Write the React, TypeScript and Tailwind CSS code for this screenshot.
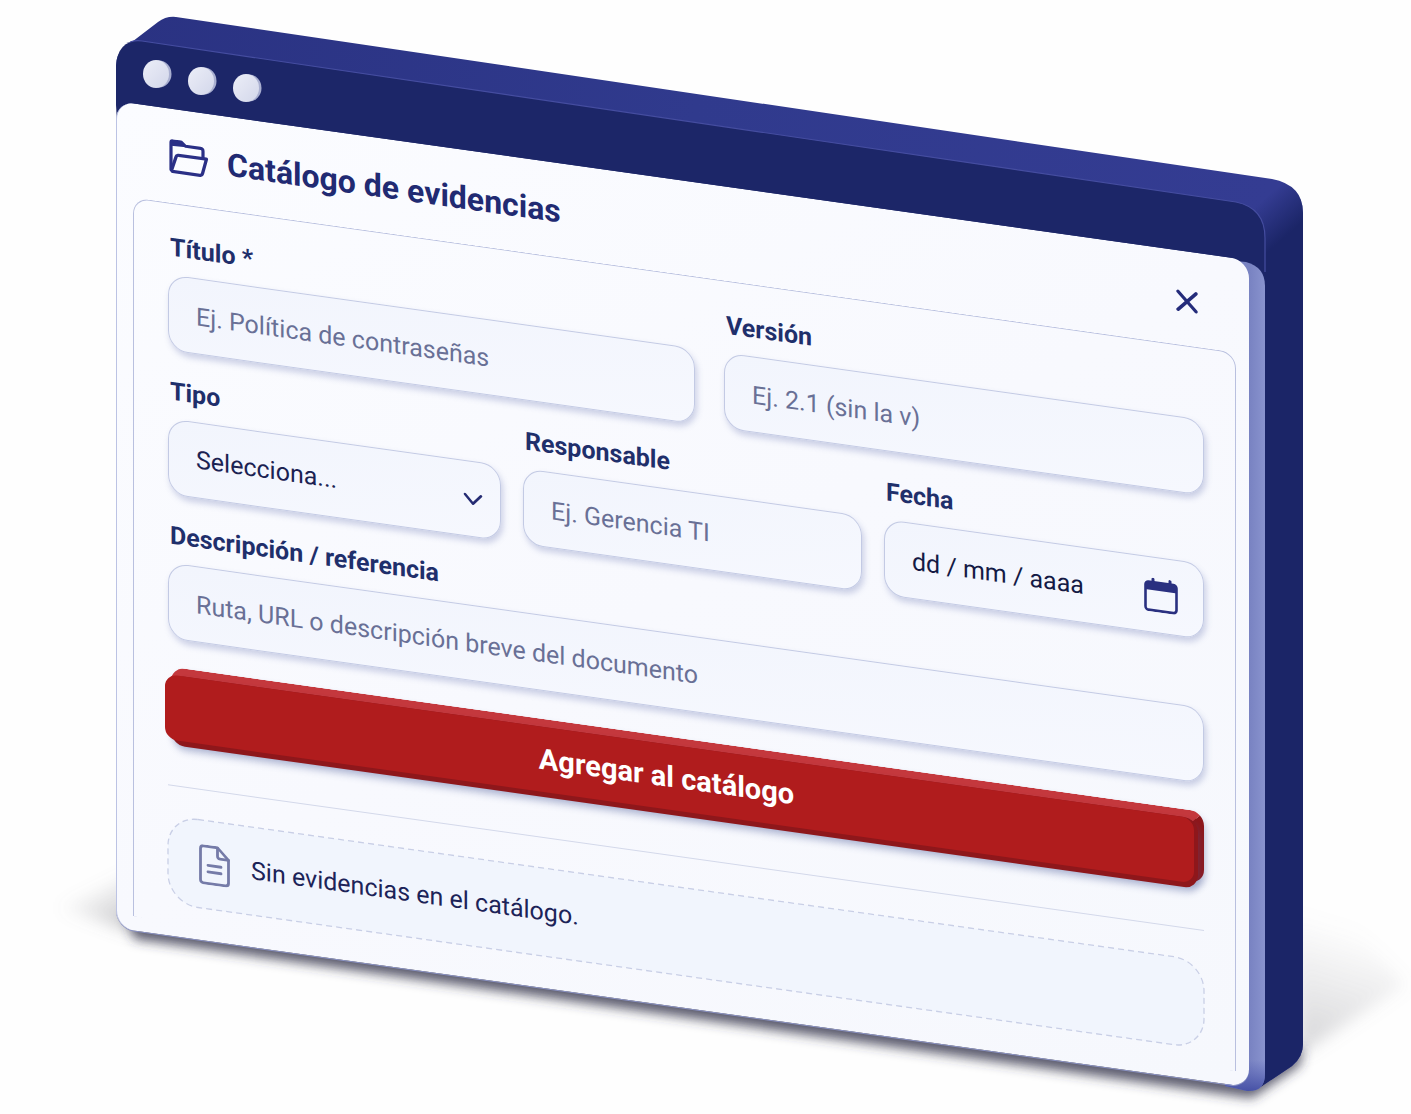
import type { ReactNode } from 'react'

const fieldClass =
  'block h-[76px] w-full rounded-[20px] border border-[#c3cae4] bg-gradient-to-br from-[#f2f5fd] to-[#f6f8fe] px-[27px] text-[25px] shadow-[2px_4px_6px_rgba(84,98,165,0.28)] outline-none placeholder:text-[#697096] placeholder:opacity-100 focus:border-[#6a74bd]'

function Field({ id, label, children }: { id: string; label: string; children: ReactNode }) {
  return (
    <div className="min-w-0">
      <label htmlFor={id} className="mb-[11px] block pl-[2px] text-[25px] leading-[32px] font-bold whitespace-nowrap text-[#1f2f6b]">
        {label}
      </label>
      <div className="relative">{children}</div>
    </div>
  )
}

function FolderIcon() {
  return (
    <svg width="40" height="36" viewBox="0 0 40 36" fill="none" stroke="#2a2f86" strokeWidth="3.200" strokeLinejoin="round" strokeLinecap="round" aria-hidden="true">
      <path d="M2 7V3.500Q2 2 3.500 2H12.500L17 6.500z" fill="#2a2f86" stroke="none" />
      <path d="M2 31V4Q2 2 4 2h8.500l4 3.500H31.500Q34 5.500 34 8V14" />
      <path d="M2.500 31.500L7 17.500Q7.500 15.500 9.500 15.500H37.500L33.500 30.500Q33 32.500 31 32.500H3.500z" />
    </svg>
  )
}

function CalendarIcon() {
  return (
    <svg width="34" height="34" viewBox="0 0 34 34" fill="none" aria-hidden="true">
      <path d="M9 1.500V5M26 1.500V5" stroke="#2a3080" strokeWidth="3" strokeLinecap="round" />
      <rect x="1.500" y="4.500" width="31" height="28" rx="3" stroke="#2a3080" strokeWidth="2.600" />
      <path d="M1 7q0-3 3-3h26q3 0 3 3v5.500H1z" fill="#2a3080" />
    </svg>
  )
}

function DocumentIcon() {
  return (
    <svg width="32" height="40" viewBox="0 0 32 40" fill="none" stroke="#757ba8" strokeWidth="2.800" strokeLinecap="round" strokeLinejoin="round" aria-hidden="true">
      <path d="M4.500 1.500H18.500L29.500 12.500V35.500Q29.500 38.500 26.500 38.500H4.500Q1.500 38.500 1.500 35.500V4.500Q1.500 1.500 4.500 1.500z" />
      <path d="M18.500 2V10Q18.500 12.500 21 12.500H29.500" />
      <path d="M9 20.500H22M9 27H22" />
    </svg>
  )
}

// Extruded shell behind the panel: top face, front bar, side and floor shadow.
function WindowShell() {
  return (
    <svg className="absolute inset-0 h-full w-full" viewBox="0 0 1411 1114" preserveAspectRatio="none" fill="none" aria-hidden="true">
      <defs>
        <linearGradient id="top" x1="116" y1="40" x2="1270" y2="200" gradientUnits="userSpaceOnUse">
          <stop offset="0" stopColor="#2a3282" />
          <stop offset="0.5" stopColor="#303a8d" />
          <stop offset="1" stopColor="#343c92" />
        </linearGradient>
        <linearGradient id="corner" x1="1256" y1="206" x2="1284" y2="238" gradientUnits="userSpaceOnUse">
          <stop offset="0" stopColor="#1b2567" stopOpacity="0" />
          <stop offset="1" stopColor="#1b2567" />
        </linearGradient>
        <linearGradient id="edge" x1="1250" y1="0" x2="1265" y2="0" gradientUnits="userSpaceOnUse">
          <stop offset="0" stopColor="#7983c2" />
          <stop offset="1" stopColor="#8993ce" />
        </linearGradient>
        <linearGradient id="edgeFoot" x1="0" y1="1060" x2="0" y2="1092" gradientUnits="userSpaceOnUse">
          <stop offset="0" stopColor="#4f5ab0" stopOpacity="0" />
          <stop offset="1" stopColor="#4550a5" />
        </linearGradient>
        <linearGradient id="castRight" x1="1310" y1="1040" x2="1345" y2="925" gradientUnits="userSpaceOnUse">
          <stop offset="0" stopColor="#8a8a90" stopOpacity="0.32" />
          <stop offset="1" stopColor="#9a9aa0" stopOpacity="0" />
        </linearGradient>
        <linearGradient id="castLeft" x1="125" y1="935" x2="90" y2="880" gradientUnits="userSpaceOnUse">
          <stop offset="0" stopColor="#66666c" stopOpacity="0.42" />
          <stop offset="1" stopColor="#8a8a90" stopOpacity="0" />
        </linearGradient>
        <linearGradient id="dot" x1="0" y1="0" x2="1" y2="1">
          <stop offset="0" stopColor="#eceef8" />
          <stop offset="1" stopColor="#d3d7ea" />
        </linearGradient>
        <filter id="soft" x="-20%" y="-20%" width="140%" height="140%">
          <feGaussianBlur stdDeviation="8" />
        </filter>
        <filter id="tight" x="-5%" y="-20%" width="110%" height="140%">
          <feGaussianBlur stdDeviation="6" />
        </filter>
      </defs>
      <path d="M1290 890L1330 900L1405 985L1300 1054z" fill="url(#castRight)" filter="url(#soft)" />
      <path d="M140 870L60 908L140 934z" fill="url(#castLeft)" filter="url(#soft)" />
      <path d="M125 912L1250 1078L1303 1045L1300 1065L1252 1098L135 939z" fill="#35354a" fillOpacity="0.8" filter="url(#tight)" />

      <path d="M116 105V66Q116 54 124 48L158 22Q166 16 176 17L1272 179Q1303 185 1303 213V1044Q1303 1057 1292 1066L1262 1086Q1254 1091 1244 1090L1180 1000V250z" fill="url(#top)" />
      <path d="M1240 203L1272 179Q1303 185 1303 213V1044Q1303 1057 1292 1066L1262 1086Q1254 1091 1244 1090V230z" fill="url(#corner)" />
      <path d="M116 105V66Q118 39 142 41L1236 202Q1265 208 1265 238V300L118 140z" fill="#1c2668" />
      <path d="M130 42Q136 40 142 41L1236 202Q1265 208 1265 238V272" stroke="#454da0" strokeWidth="1.200" />
      <path d="M1225 260L1246 262Q1265 267 1265 286V1074Q1265 1092 1247 1091L1225 1086z" fill="url(#edge)" />
      <path d="M1225 1050H1265V1074Q1265 1092 1247 1091L1225 1086z" fill="url(#edgeFoot)" />

      {[[157, 74], [202, 81], [247, 88]].map(([x, y]) => (
        <g key={x}>
          <ellipse cx={x + 2} cy={y} rx="12.500" ry="13.500" fill="#a9afd0" />
          <ellipse cx={x - 1} cy={y} rx="13" ry="14" fill="url(#dot)" />
        </g>
      ))}
    </svg>
  )
}

export default function App() {
  return (
    <main className="relative min-h-screen overflow-hidden bg-[#fefefe] pt-[101px] pr-[162px] pb-[185px] pl-[116px] font-[Roboto,sans-serif]">
      <WindowShell />
      <section className="relative origin-top-left skew-y-8 rounded-[18px] border-l border-[#bcc3e4] bg-gradient-to-br from-[#fbfcff] via-[#f8f9fe] to-[#f6f8fd] pr-[13px] pb-[14px] pl-[16px] shadow-[0_1px_0_#8b93c4]">
        <header className="flex h-[94px] items-center pt-[2px] pr-[38px] pl-[36px]">
          <FolderIcon />
          <h1 className="ml-[18px] text-[32px] leading-[40px] font-bold whitespace-nowrap text-[#212a72]">Catálogo de evidencias</h1>
          <button type="button" aria-label="Cerrar" className="mt-[4px] ml-auto">
            <svg width="22" height="24" viewBox="0 0 22 24" stroke="#252c7b" strokeWidth="3.400" strokeLinecap="round" aria-hidden="true">
              <path d="M2 3L20 21M20 3L2 21" />
            </svg>
          </button>
        </header>

        <div className="rounded-t-[16px] border border-b-0 border-[#b9c0df] pt-[28px] pr-[31px] pb-[18px] pl-[34px]">
          <form className="flex flex-col gap-[25px]" onSubmit={(e) => e.preventDefault()}>
            <div className="grid grid-cols-[527fr_480fr] gap-[29px]">
              <Field id="titulo" label="Título *">
                <input id="titulo" type="text" placeholder="Ej. Política de contraseñas" className={fieldClass} />
              </Field>
              <Field id="version" label="Versión">
                <input id="version" type="text" placeholder="Ej. 2.1 (sin la v)" className={fieldClass} />
              </Field>
            </div>

            <div className="grid grid-cols-[333fr_339fr_320fr] gap-[22px]">
              <Field id="tipo" label="Tipo">
                <select id="tipo" className={`${fieldClass} appearance-none text-[#1b2252]`}>
                  <option>Selecciona...</option>
                </select>
                <svg className="pointer-events-none absolute inset-y-0 right-[18px] my-auto" width="20" height="14" viewBox="0 0 20 14" fill="none" stroke="#252c73" strokeWidth="2.600" strokeLinecap="round" strokeLinejoin="round" aria-hidden="true">
                  <path d="M2 3L10 11.500L18 3" />
                </svg>
              </Field>
              <Field id="responsable" label="Responsable">
                <input id="responsable" type="text" placeholder="Ej. Gerencia TI" className={fieldClass} />
              </Field>
              <Field id="fecha" label="Fecha">
                <input id="fecha" type="text" placeholder="dd / mm / aaaa" className={`${fieldClass} placeholder:text-[#141a45]!`} />
                <button type="button" aria-label="Abrir calendario" className="absolute inset-y-0 right-[26px]">
                  <CalendarIcon />
                </button>
              </Field>
            </div>

            <Field id="descripcion" label="Descripción / referencia">
              <input id="descripcion" type="text" placeholder="Ruta, URL o descripción breve del documento" className={fieldClass} />
            </Field>

            <button type="submit" className="relative mt-[3px] -ml-[3px] h-[78px] text-[29px] font-bold text-white">
              <span className="absolute top-0 right-0 bottom-[6px] left-[6px] rounded-[14px] border-t-[10px] border-r-[10px] border-t-[#c4383d] border-r-[#8e171b] bg-[#8e171b] shadow-[2px_5px_7px_rgba(70,85,150,0.3)]" />
              <span className="absolute top-[8px] right-[6px] bottom-0 left-[6px] rounded-[14px] bg-[#8e171b] shadow-[2px_5px_7px_rgba(70,85,150,0.3)]" />
              <span className="absolute top-[8px] right-[10px] bottom-[5px] left-0 flex items-center justify-center rounded-[12px] bg-[#b01c1d] pr-[26px]">
                Agregar al catálogo
              </span>
            </button>
          </form>

          <hr className="mt-[40px] mb-[30px] border-[#d3d8ea]" />

          <div className="relative flex h-[88px] items-center rounded-[30px] bg-[#f1f5fd] pl-[31px]">
            <svg className="absolute inset-0 h-full w-full overflow-visible" fill="none" aria-hidden="true">
              <rect width="100%" height="100%" rx="30" stroke="#c9cfe6" strokeWidth="1.300" strokeDasharray="6 4" />
            </svg>
            <DocumentIcon />
            <p className="ml-[20px] text-[25px] leading-[32px] whitespace-nowrap text-[#1c2358]">Sin evidencias en el catálogo.</p>
          </div>
        </div>
      </section>
    </main>
  )
}
